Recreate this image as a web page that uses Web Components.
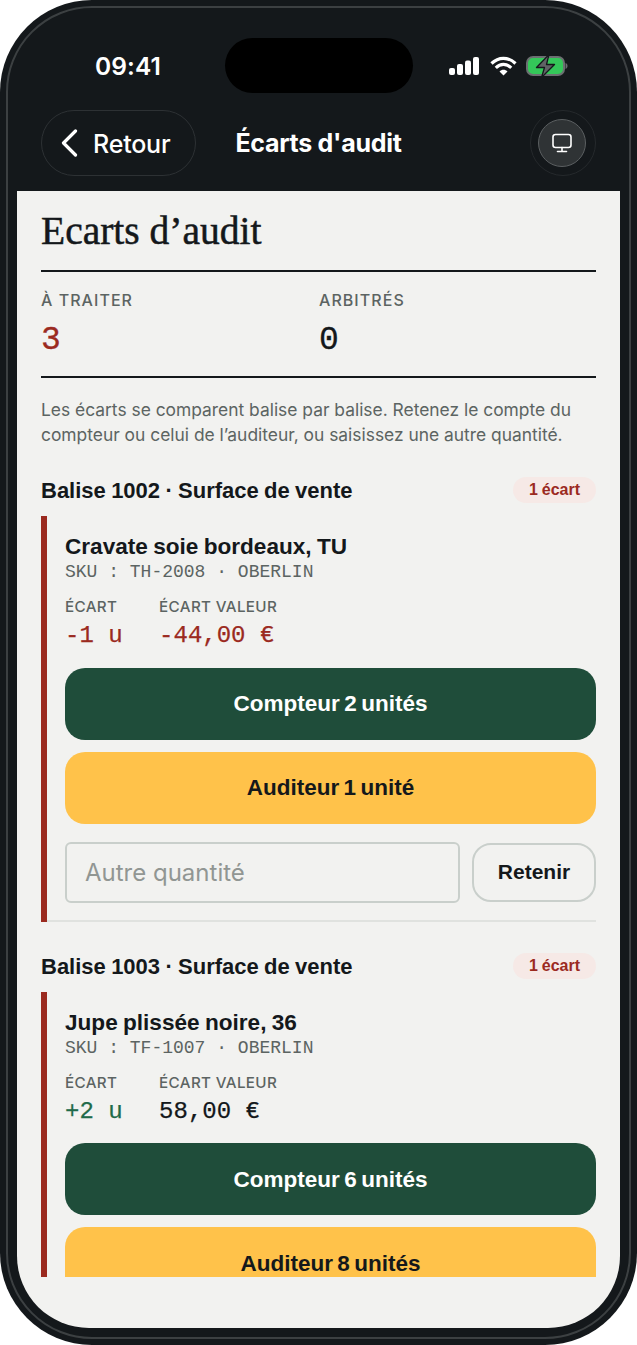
<!DOCTYPE html>
<html lang="fr"><head><meta charset="utf-8"><title>Écarts d'audit</title>
<style>
html,body{margin:0;padding:0;background:#fff}
body{font-family:Inter,"Liberation Sans",sans-serif;width:637px;height:1345px;overflow:hidden}
</style></head><body>
<phone-frame>
  <status-bar slot="top"></status-bar>
  <nav-bar slot="top" title="Écarts d'audit"></nav-bar>
  <page-title>Ecarts d’audit</page-title>
  <stat-row>
    <stat-cell label="À TRAITER" value="3" tone="red"></stat-cell>
    <stat-cell label="ARBITRÉS" value="0"></stat-cell>
  </stat-row>
  <intro-text>Les écarts se comparent balise par balise. Retenez le compte du compteur ou celui de l’auditeur, ou saisissez une autre quantité.</intro-text>
  <audit-group heading="Balise 1002 · Surface de vente" badge="1 écart">
    <audit-item name="Cravate soie bordeaux, TU" sku="SKU : TH-2008 · OBERLIN" gap="-1 u" gaptone="red" val="-44,00 €" valtone="red" a="Compteur 2 unités" b="Auditeur 1 unité" withinput></audit-item>
  </audit-group>
  <audit-group heading="Balise 1003 · Surface de vente" badge="1 écart" style="margin-top:31.100px">
    <audit-item name="Jupe plissée noire, 36" sku="SKU : TF-1007 · OBERLIN" gap="+2 u" gaptone="green" val="58,00 €" a="Compteur 6 unités" b="Auditeur 8 unités"></audit-item>
  </audit-group>
</phone-frame>
<script>
function el(name, css, html){
  customElements.define(name, class extends HTMLElement{
    connectedCallback(){
      if(this.shadowRoot) return;
      const r=this.attachShadow({mode:'open'});
      const a=n=>this.getAttribute(n)||'';
      r.innerHTML='<style>'+css+'</style>'+(typeof html==='function'?html(a,this):html);
    }
  });
}
const F='Inter,"Liberation Sans",sans-serif', H='"Liberation Sans",Arial,sans-serif', M='"Liberation Mono",monospace';
el('phone-frame',`
:host{display:block;position:relative;width:637px;height:1345px;background:#14181b;border-radius:92px;overflow:hidden;box-sizing:border-box;color:#14181b}
.ring{position:absolute;inset:6px;border:2px solid #3c4042;border-radius:86px;pointer-events:none}
.wrap{display:flex;flex-direction:column;height:100%;box-sizing:border-box;padding:0 17px 17px}
.screen{position:relative;flex:1;min-height:0;background:#f2f2f0;border-radius:0 0 72px 72px;padding:0 24px 51px;display:flex;flex-direction:column}
.scroll{flex:1;min-height:0;overflow:hidden}
`,`<div class="ring"></div><div class="wrap"><slot name="top"></slot><div class="screen"><div class="scroll"><slot></slot></div></div></div>`);

el('status-bar',`
:host{display:block;height:110px}
.bar{display:grid;grid-template-columns:208px 188px 1fr;padding-top:38px;align-items:center}
.time{font:600 24.5px ${F};color:#fff;text-align:left;padding-left:78px;box-sizing:border-box;white-space:nowrap;letter-spacing:.1px}
.island{height:55px;background:#000;border-radius:28px}
.ic{display:flex;align-items:center;padding-left:36px;gap:0}
svg{display:block}
`,`<div class="bar"><div class="time">09:41</div><div class="island"></div><div class="ic">
<svg width="119" height="22" viewBox="0 0 119 22" fill="none">
<g fill="#fff"><rect x="0" y="13" width="6" height="7" rx="2"/><rect x="8" y="9" width="6" height="11" rx="2"/><rect x="16" y="5.500" width="6" height="14.500" rx="2"/><rect x="24" y="2" width="6" height="18" rx="2"/></g>
<g fill="none" stroke="#fff" stroke-width="3.200" stroke-linecap="butt"><path d="M42.500 8.500C49.500 1.600 59.500 1.600 66.500 8.500"/><path d="M46.800 12.800C51.400 8.300 57.600 8.300 62.200 12.800"/></g><path d="M50.500 16.500C52.700 14.300 56.300 14.300 58.500 16.500L54.500 20.500Z" fill="#fff"/>
<rect x="78" y="2" width="37" height="18" rx="6" fill="#34c759" stroke="#6b6f71" stroke-width="2"/>
<path d="M116.500 8v6c1.300-.4 2-1.600 2-3s-.7-2.600-2-3Z" fill="#6b6f71"/>
<path d="M100 -.5L87.500 12.500H95.500L92.500 22.500L105.500 9.500H97.500Z" fill="#5f6365" stroke="#14181b" stroke-width="1.300" stroke-linejoin="round"/>
</svg></div></div>`);

el('nav-bar',`
:host{display:block;height:81px;box-sizing:border-box}
.bar{display:grid;grid-template-columns:1fr auto 1fr;align-items:center;padding:0 24px;height:66px}
.back{width:155px;height:66px;box-sizing:border-box;border:1.500px solid #2d3134;border-radius:33px;display:flex;align-items:center;padding-left:18px;gap:15px;color:#fff;font:500 25px ${F};letter-spacing:-.2px}
.back span{padding-top:2px}
.t{text-align:center;color:#fff;font:700 25px ${F};letter-spacing:-.3px;white-space:nowrap}
.out{justify-self:end;width:66px;height:66px;box-sizing:border-box;border:1.500px solid #25292c;border-radius:50%;display:flex;align-items:center;justify-content:center;padding-right:3px}
.in{width:48px;height:48px;box-sizing:border-box;border:1.500px solid #5b5f61;border-radius:50%;background:#2f3335;display:flex;align-items:center;justify-content:center}
svg{display:block}
`,a=>`<div class="bar"><div class="back"><svg width="18" height="28" viewBox="0 0 18 28" fill="none"><path d="M15.500 2L3.500 14L15.500 26" stroke="#fff" stroke-width="3.200" stroke-linecap="round" stroke-linejoin="round"/></svg><span>Retour</span></div><div class="t">${a('title')}</div><div class="out"><div class="in"><svg width="22" height="22" viewBox="0 0 22 22" fill="none" stroke="#fff" stroke-width="1.600" stroke-linecap="round" stroke-linejoin="round"><rect x="2" y="2.500" width="18" height="13" rx="2.500"/><path d="M11 15.500V19.500M6.500 19.500H15.500"/></svg></div></div></div>`);

el('page-title',`
:host{display:block;height:81px;box-sizing:border-box;border-bottom:2px solid #14181b;font:400 39.500px/80px "Liberation Serif",serif;-webkit-text-stroke:.5px #14181b;color:#14181b;white-space:nowrap}
`,`<slot></slot>`);

el('stat-row',`
:host{display:grid;grid-template-columns:278px 1fr;height:105.500px;box-sizing:border-box;border-bottom:2px solid #14181b;padding-top:19px}
`,`<slot></slot>`);

el('stat-cell',`
:host{display:block}
.l{font:500 16px/18px ${F};letter-spacing:1.050px;color:#5c6462}
.v{font:400 33px/38px ${M};margin-top:13px;color:#14181b;-webkit-text-stroke:.3px currentColor}
.red{color:#9b2a1f}
`,a=>`<div class="l">${a('label')}</div><div class="v ${a('tone')}">${a('value')}</div>`);

el('intro-text',`
:host{display:block;font:400 17.400px/25px ${F};color:#5c6462;padding-top:19px;margin-bottom:30.500px}
`,`<slot></slot>`);

el('audit-group',`
:host{display:block}
.h{display:flex;justify-content:space-between;align-items:center;height:26px;margin-bottom:13px}
.t{font:700 22px/26px ${H};word-spacing:-.8px;padding-top:2px;color:#14181b;white-space:nowrap}
.b{font:700 16px/26px ${H};word-spacing:-.5px;color:#9b2a1f;background:#f6e9e6;border-radius:13px;padding:0 16px}
`,a=>`<div class="h"><div class="t">${a('heading')}</div><div class="b">${a('badge')}</div></div><slot></slot>`);

el('audit-item',`
:host{display:block;border-left:6px solid #9b2a1f;padding:17px 0 19px 18px;position:relative}
:host::after{content:"";position:absolute;left:0;right:0;bottom:0;height:1.500px;background:#e0e2df}
.n{font:700 22.600px/28px ${H};word-spacing:-1px;color:#14181b;white-space:nowrap}
.s{font:400 18px/20px ${M};color:#5c6462;white-space:nowrap;margin-top:1px}
.m{display:flex;gap:36.500px;margin-top:16px}
.l{font:500 15.200px/18px ${F};letter-spacing:.35px;color:#5c6462;white-space:nowrap}
.v{font:400 24px/30px ${M};margin-top:5px;color:#14181b;white-space:nowrap;-webkit-text-stroke:.25px currentColor}
.red{color:#9b2a1f}.green{color:#1f6b4a}
.acts{display:flex;flex-direction:column;gap:12px;margin-top:16.500px}
.row{display:flex;gap:12px;margin-top:18px;align-items:center}
.inp{flex:1;height:61px;box-sizing:border-box;border:2px solid #c9cfcb;border-radius:6px;padding-left:18px;display:flex;align-items:center;font:400 24px ${F};color:#919693;white-space:nowrap}
.ret{width:124px;height:59px;box-sizing:border-box;border:2px solid #c9cfcb;border-radius:19px;display:flex;align-items:center;justify-content:center;font:700 21px ${H};color:#14181b}
`,(a,h)=>`<div class="n">${a('name')}</div><div class="s">${a('sku')}</div>
<div class="m"><div><div class="l">ÉCART</div><div class="v ${a('gaptone')}">${a('gap')}</div></div><div><div class="l">ÉCART VALEUR</div><div class="v ${a('valtone')}">${a('val')}</div></div></div>
<div class="acts"><action-button tone="green">${a('a')}</action-button><action-button tone="amber">${a('b')}</action-button></div>
${h.hasAttribute('withinput')?'<div class="row"><div class="inp">Autre quantité</div><div class="ret">Retenir</div></div>':''}`);

el('action-button',`
:host{display:flex;height:72px;box-sizing:border-box;padding-top:1.500px;border-radius:20px;align-items:center;justify-content:center;font:700 22.500px ${H};word-spacing:-1.800px}
:host([tone=green]){background:#1f4d3a;color:#fff}
:host([tone=amber]){background:#ffc24a;color:#14181b}
`,`<slot></slot>`);
</script>
</body></html>
